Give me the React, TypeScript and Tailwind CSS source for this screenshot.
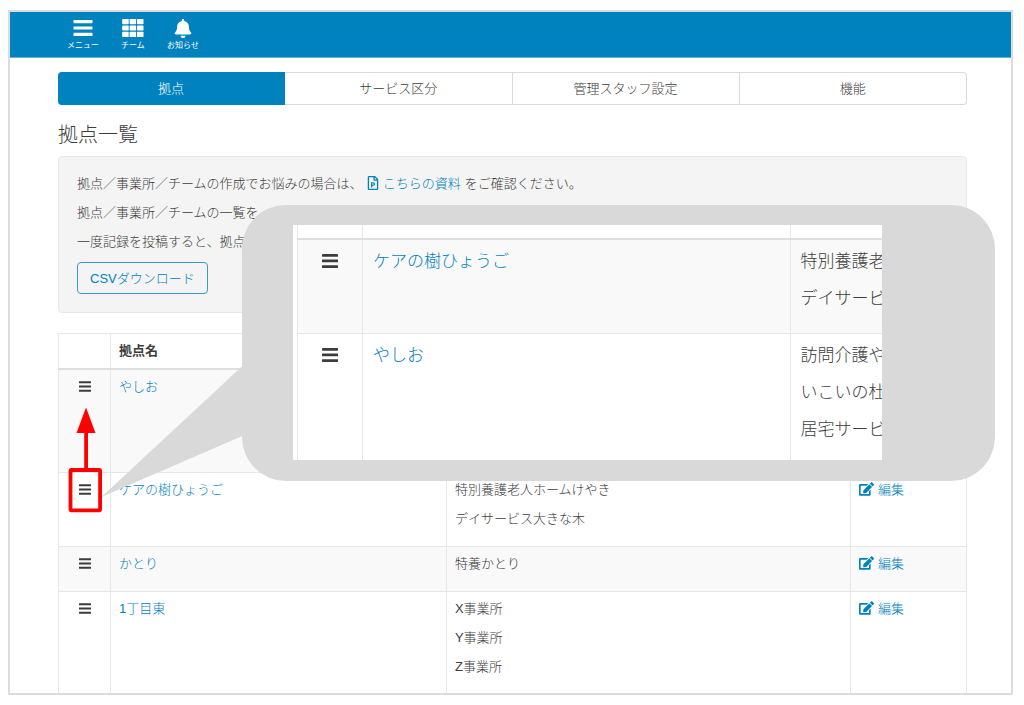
import React, { useState } from 'react';
import { FaBell, FaEdit, FaRegFilePowerpoint } from 'react-icons/fa';

interface Site {
    name: string;
    offices: string[];
}

const TABS = ['拠点', 'サービス区分', '管理スタッフ設定', '機能'];

const SITES: Site[] = [
    { name: 'やしお', offices: ['訪問介護やしお', 'いこいの杜', '居宅サービス'] },
    { name: 'ケアの樹ひょうご', offices: ['特別養護老人ホームけやき', 'デイサービス大きな木'] },
    { name: 'かとり', offices: ['特養かとり'] },
    { name: '1丁目東', offices: ['X事業所', 'Y事業所', 'Z事業所'] },
];

const REORDERED: Site[] = [
    { name: 'ケアの樹ひょうご', offices: ['特別養護老', 'デイサービ'] },
    { name: 'やしお', offices: ['訪問介護や', 'いこいの杜', '居宅サービ'] },
];

const HandleIcon: React.FC<{ className: string }> = ({ className }) => (
    <svg viewBox="0 0 16 14" className={className} fill="currentColor" aria-hidden="true">
        <rect x="0" y="0" width="16" height="2.7" rx="0.4" />
        <rect x="0" y="5.6" width="16" height="2.7" rx="0.4" />
        <rect x="0" y="11.2" width="16" height="2.7" rx="0.4" />
    </svg>
);

const MenuIcon = () => (
    <svg viewBox="0 0 20 18" className="w-5 h-[18px]" fill="currentColor" aria-hidden="true">
        <rect x="0.5" y="1" width="19" height="3.2" rx="0.6" />
        <rect x="0.5" y="7.4" width="19" height="3.2" rx="0.6" />
        <rect x="0.5" y="13.8" width="19" height="3.2" rx="0.6" />
    </svg>
);

const GridIcon = () => (
    <svg viewBox="0 0 22 18" className="w-[22px] h-[18px]" fill="currentColor" aria-hidden="true">
        {[0, 6.4, 12.8].map(y =>
            [0.2, 7.6, 15].map(x => <rect key={`${x}-${y}`} x={x} y={y} width="6.5" height="5.2" rx="0.6" />)
        )}
    </svg>
);

const HeaderButton: React.FC<{ label: string; children: React.ReactNode }> = ({ label, children }) => (
    <button type="button" className="w-[50px] flex flex-col items-center pt-[7px] text-white font-normal">
        {children}
        <span className="text-[8px] leading-3 mt-[3px] whitespace-nowrap">{label}</span>
    </button>
);

export default function App() {
    const [activeTab, setActiveTab] = useState(TABS[0]);

    return (
        <div className="min-h-screen bg-white pt-2.5 pb-[11px] pl-2 pr-[11px] text-[#3c3c3c] text-[13px] leading-[29px] font-light font-['Liberation_Sans','Noto_Sans_CJK_JP',sans-serif]">
            <div className="relative border-2 border-[#dcdcdc] overflow-hidden">
                <header className="h-[46px] bg-[#0082be] border-b border-[#5fb4dc] flex items-start pl-12">
                    <HeaderButton label="メニュー"><MenuIcon /></HeaderButton>
                    <HeaderButton label="チーム"><GridIcon /></HeaderButton>
                    <HeaderButton label="お知らせ"><FaBell className="w-5 h-[19px] -mb-px" /></HeaderButton>
                </header>

                <main className="pl-12 pr-11 pt-3.5">
                    <nav className="grid grid-cols-4">
                        {TABS.map(tab => (
                            <button
                                key={tab}
                                type="button"
                                onClick={() => setActiveTab(tab)}
                                className={`h-[33px] border-y border-r first:rounded-l last:rounded-r leading-[29px]
                                    ${activeTab === tab ? 'bg-[#0082be] border-[#0082be] text-white' : 'bg-white border-[#d9d9d9]'}
                                `}
                            >
                                {tab}
                            </button>
                        ))}
                    </nav>

                    <h1 className="text-[20px] mt-4 mb-1.5">拠点一覧</h1>

                    <section className="bg-[#f4f4f4] border border-[#e8e8e8] rounded px-[18px] pt-3 pb-[18px]">
                        <p>
                            拠点／事業所／チームの作成でお悩みの場合は、
                            <a href="#guide" className="text-[#0082be] mx-1">
                                <FaRegFilePowerpoint className="inline w-3 h-3.5 mr-1 align-[-2px]" />
                                こちらの資料
                            </a>
                            をご確認ください。
                        </p>
                        <p>拠点／事業所／チームの一覧を</p>
                        <p>一度記録を投稿すると、拠点</p>
                        <button type="button" className="block mt-1.5 h-8 px-3 border border-[#3a9bcb] rounded text-[#0082be] leading-[29px]">
                            CSVダウンロード
                        </button>
                    </section>

                    <table className="w-full table-fixed border-collapse mt-5 border-x border-t border-[#e6e6e6]">
                        <colgroup>
                            <col className="w-[52px]" />
                            <col className="w-[37%]" />
                            <col />
                            <col className="w-[116px]" />
                        </colgroup>
                        <thead>
                            <tr className="h-[35px] border-b-2 border-[#dedede] text-left">
                                <th className="border-r border-r-[#e6e6e6]" />
                                <th className="border-r border-r-[#e6e6e6] px-2 font-bold">拠点名</th>
                                <th className="border-r border-r-[#e6e6e6]" />
                                <th />
                            </tr>
                        </thead>
                        <tbody>
                            {SITES.map(site => (
                                <tr key={site.name} className="group align-top border-b border-[#e6e6e6] last:border-b-0 odd:bg-[#f9f9f9] last:bg-white">
                                    <td className="border-r border-[#e6e6e6] pt-0.5 text-center">
                                        <button type="button" aria-label="並び替え" className="cursor-move">
                                            <HandleIcon className="inline w-3 h-[11px] align-[-1px]" />
                                        </button>
                                    </td>
                                    <td className="border-r border-[#e6e6e6] pt-0.5 px-2">
                                        <a href="#site" className="text-[#0082be]">{site.name}</a>
                                    </td>
                                    <td className="border-r border-[#e6e6e6] pt-0.5 pb-[13px] px-2 group-last:pb-3">
                                        {site.offices.map(office => <div key={office}>{office}</div>)}
                                    </td>
                                    <td className="pt-0.5 px-2">
                                        <a href="#edit" className="text-[#0082be] flex items-center gap-1">
                                            <FaEdit className="w-[15px] h-3.5" />
                                            編集
                                        </a>
                                    </td>
                                </tr>
                            ))}
                        </tbody>
                    </table>
                </main>

                {/* Callout with the order after dragging */}
                <div className="absolute left-[232px] top-[193px] w-[753px] h-[276px] rounded-[44px] bg-[#d9d9d9] pt-5 pb-[21px] pl-[51px] pr-[113px]">
                    <div className="h-full overflow-hidden bg-white pl-1 text-[17px] leading-[37px]">
                        <table className="w-full table-fixed border-collapse border-l border-[#e6e6e6]">
                            <colgroup>
                                <col className="w-[65px]" />
                                <col />
                                <col className="w-[92px]" />
                            </colgroup>
                            <tbody>
                                <tr className="h-3.5 border-b-2 border-[#dedede]">
                                    <td className="border-r border-r-[#e6e6e6]" />
                                    <td className="border-r border-r-[#e6e6e6]" />
                                    <td />
                                </tr>
                                {REORDERED.map(site => (
                                    <tr key={site.name} className="align-top border-b border-[#e6e6e6] even:bg-[#f9f9f9]">
                                        <td className="border-r border-[#e6e6e6] pt-[3px] text-center">
                                            <HandleIcon className="inline w-4 h-3.5 align-[-1px]" />
                                        </td>
                                        <td className="border-r border-[#e6e6e6] pt-[3px] px-2.5">
                                            <a href="#site" className="text-[#0082be]">{site.name}</a>
                                        </td>
                                        <td className="pt-[3px] pb-4 pl-2.5 whitespace-nowrap">
                                            {site.offices.map(office => <div key={office}>{office}</div>)}
                                        </td>
                                    </tr>
                                ))}
                            </tbody>
                        </table>
                    </div>
                </div>

                {/* Callout tail, drag arrow and highlight frame */}
                <svg viewBox="68 366 176 148" className="absolute left-[58px] top-[354px] w-[176px] h-[148px] pointer-events-none" aria-hidden="true">
                    <polygon points="244,364.5 101.5,497 244,435.2" fill="#d9d9d9" />
                    <rect x="70.5" y="470" width="29.6" height="40.3" rx="1" fill="none" stroke="#f00" strokeWidth="3.8" />
                    <rect x="84.2" y="430" width="3.8" height="40" fill="#f00" />
                    <polygon points="86,407.5 95.5,433 76.5,433" fill="#f00" />
                </svg>
            </div>
        </div>
    );
}
